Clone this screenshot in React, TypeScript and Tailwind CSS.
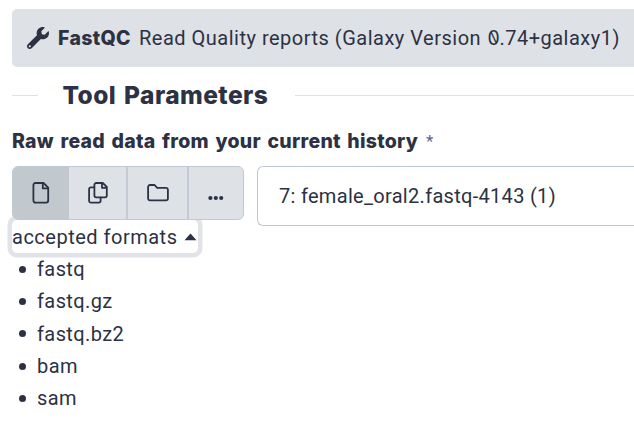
import { FaWrench } from "react-icons/fa";

const formats = ["fastq", "fastq.gz", "fastq.bz2", "bam", "sam"];

const stroke = {
  fill: "none",
  stroke: "currentColor",
  strokeWidth: 1.8,
  strokeLinejoin: "round" as const,
  strokeLinecap: "round" as const,
};

function FileIcon() {
  return (
    <svg width="18" height="22" viewBox="0 0 18 22" {...stroke}>
      <path d="M3.4 1H11.5L16.2 5.7V18.6A2 2 0 0 1 14.2 20.6H3.4A2 2 0 0 1 1.4 18.6V3A2 2 0 0 1 3.4 1Z" />
      <path d="M10.8 1.3V6.4H15.9" />
    </svg>
  );
}

function CopyIcon() {
  return (
    <svg width="20" height="22" viewBox="0 0 20 22" {...stroke}>
      <path d="M8.2 1H14.8L18.8 5V13.6A1.8 1.8 0 0 1 17 15.4H8.2A1.8 1.8 0 0 1 6.4 13.6V2.8A1.8 1.8 0 0 1 8.2 1Z" />
      <path d="M14 1.3V5.8H18.5" />
      <path d="M6.2 5.4H2.9A1.8 1.8 0 0 0 1.1 7.2V18.8A1.8 1.8 0 0 0 2.9 20.6H10.8A1.8 1.8 0 0 0 12.6 18.8V15.6" />
    </svg>
  );
}

function FolderIcon() {
  return (
    <svg width="22" height="18" viewBox="0 0 22 18" {...stroke}>
      <path d="M3 1H7.6L10.2 3.8H19A1.9 1.9 0 0 1 20.9 5.7V14.5A1.9 1.9 0 0 1 19 16.4H3A1.9 1.9 0 0 1 1.1 14.5V2.9A1.9 1.9 0 0 1 3 1Z" />
    </svg>
  );
}

function DotsIcon() {
  return (
    <svg width="16" height="6" viewBox="0 0 16 6" fill="currentColor">
      <circle cx="2.4" cy="3" r="2.1" />
      <circle cx="7.8" cy="3" r="2.1" />
      <circle cx="13.2" cy="3" r="2.1" />
    </svg>
  );
}

export default function App() {
  return (
    <div className="h-[436px] w-[634px] overflow-hidden bg-white pl-3 pt-[9px] font-['Roboto',sans-serif] text-[20px] text-[#2c3143]">
      <header className="flex h-[58px] items-center rounded-l-[5px] bg-[#dee2e6] pl-[15px] whitespace-nowrap">
        <FaWrench className="mr-[9px] size-[22px] shrink-0" />
        <h1 className="flex items-baseline leading-6">
          <span className="w-[81px] font-['Inter',sans-serif] text-[19.5px] font-extrabold tracking-[0.3px]">FastQC</span>
          <span className="tracking-[0.5px]">
            Read Quality reports (Galaxy Version <span className="inline-block -scale-x-100 font-['Inter',sans-serif] text-[19.5px] [font-feature-settings:'zero']">0</span>.74+galaxy1)
          </span>
        </h1>
      </header>

      <div className="flex h-[57px] items-center">
        <span className="h-px w-[26px] bg-[#dee2e6]" />
        <h2 className="ml-[24.5px] w-[232.5px] font-['Inter',sans-serif] text-[24.5px] font-extrabold tracking-[0.45px] [word-spacing:2px] whitespace-nowrap">Tool Parameters</h2>
        <span className="h-px flex-1 bg-[#dee2e6]" />
      </div>

      <div className="flex h-[42px] pt-[5px] leading-6 whitespace-nowrap">
        <span className="w-[414px] font-['Inter',sans-serif] text-[19.5px] font-extrabold tracking-[0.27px] [word-spacing:2px]">Raw read data from your current history</span>
        <span className="text-[17px] text-[#58658c]">*</span>
      </div>

      <div className="flex h-[54px] items-start gap-[13px]">
        <div className="relative z-10 flex h-[54px] w-[232px] shrink-0 overflow-hidden rounded-[6px] border-[1.5px] border-[#c0c8d0] bg-[#dee2e6]">
          <button className="flex w-[56px] items-center justify-center bg-[#c1c8ce]"><FileIcon /></button>
          <button className="flex w-[59px] items-center justify-center border-r-2 border-[#c5cbd4]"><CopyIcon /></button>
          <button className="flex w-[61px] items-center justify-center border-r-2 border-[#c5cbd4]"><FolderIcon /></button>
          <button className="flex flex-1 items-center justify-center pt-[10px]"><DotsIcon /></button>
        </div>
        <div className="flex h-[60px] flex-1 items-center rounded-l-[6px] border-y-[1.5px] border-l-[1.5px] border-[#c0c8d0] pl-[21px] tracking-[0.3px] whitespace-nowrap">
          7: female_oral2.fastq-4143 (1)
        </div>
      </div>

      <button className="flex h-[33px] w-[186px] items-center gap-[7px] rounded-[5px] leading-6 whitespace-nowrap ring-[4.5px] ring-[#e1e3e8]">
        <span className="tracking-[0.5px]">accepted formats</span>
        <svg width="13" height="8" viewBox="0 0 13 8" className="shrink-0" fill="currentColor"><path d="M6.5 0.5L12.5 7.3H0.5Z" /></svg>
      </button>
      <ul>
        {formats.map((format) => (
          <li key={format} className="flex h-[32.3px] items-center gap-[11.5px] pl-[6.5px]">
            <span className="size-[7px] rounded-full bg-current" />
            <span className="tracking-[0.4px]">{format}</span>
          </li>
        ))}
      </ul>
    </div>
  );
}
